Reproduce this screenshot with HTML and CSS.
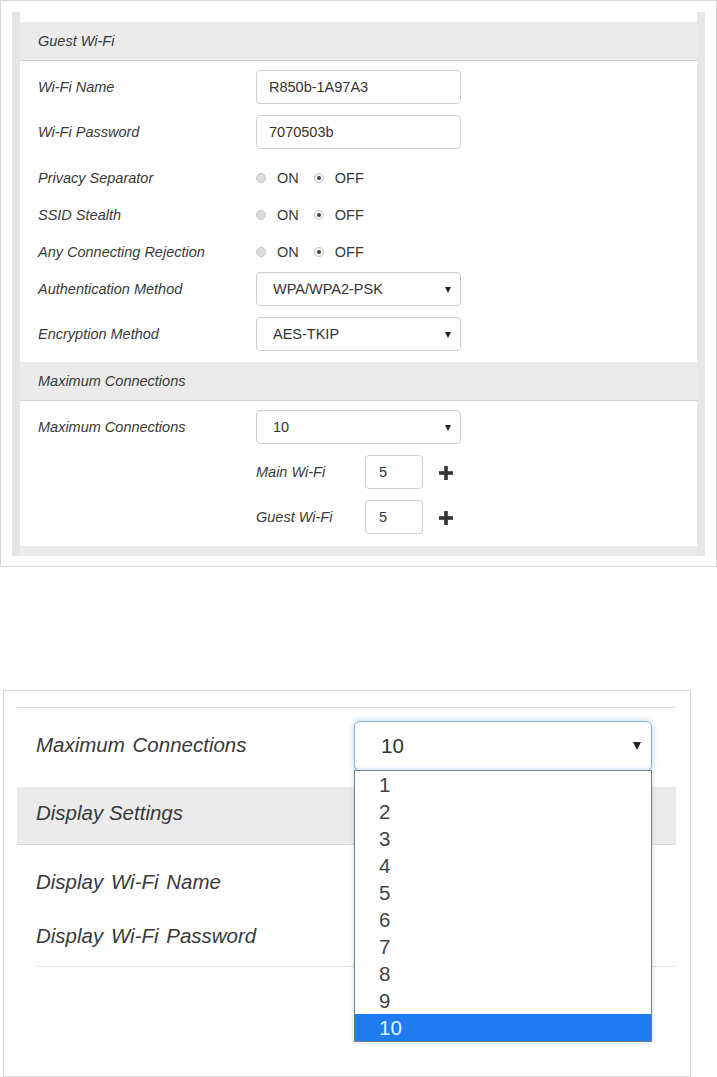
FILE: index.html
```html
<!DOCTYPE html>
<html lang="en">
<head>
  <meta charset="UTF-8" />
  <meta name="viewport" content="width=device-width, initial-scale=1.0"/>
  <title>Guest Wi-Fi Settings</title>
  <link rel="stylesheet" href="styles.css">
</head>
<body>
  <!-- first capture: guest wi-fi form -->
  <div class="shot top">
    <div class="frame">
      <div class="section-head">Guest Wi-Fi</div>
      <div class="fields">
        <div class="row">
          <div class="label">Wi-Fi Name</div>
          <input class="field" type="text" value="R850b-1A97A3">
        </div>
        <div class="row">
          <div class="label">Wi-Fi Password</div>
          <input class="field" type="text" value="7070503b">
        </div>
        <div class="row radio-row first">
          <div class="label">Privacy Separator</div>
          <span class="radio"></span><span class="opt">ON</span>
          <span class="radio checked"></span><span class="opt">OFF</span>
        </div>
        <div class="row radio-row">
          <div class="label">SSID Stealth</div>
          <span class="radio"></span><span class="opt">ON</span>
          <span class="radio checked"></span><span class="opt">OFF</span>
        </div>
        <div class="row radio-row">
          <div class="label">Any Connecting Rejection</div>
          <span class="radio"></span><span class="opt">ON</span>
          <span class="radio checked"></span><span class="opt">OFF</span>
        </div>
        <div class="row after-radio">
          <div class="label">Authentication Method</div>
          <div class="field select">WPA/WPA2-PSK<span class="arrow"></span></div>
        </div>
        <div class="row">
          <div class="label">Encryption Method</div>
          <div class="field select">AES-TKIP<span class="arrow"></span></div>
        </div>
      </div>

      <div class="section-head">Maximum Connections</div>
      <div class="fields second">
        <div class="row">
          <div class="label">Maximum Connections</div>
          <div class="field select">10<span class="arrow"></span></div>
        </div>
        <div class="row">
          <div class="label"></div>
          <div class="sub-label">Main Wi-Fi</div>
          <input class="small-field" type="text" value="5">
          <svg class="plus" width="14" height="14" viewBox="0 0 14 14"><rect x="5.2" y="0" width="3.6" height="14" fill="#333"/><rect x="0" y="5.2" width="14" height="3.6" fill="#333"/></svg>
        </div>
        <div class="row">
          <div class="label"></div>
          <div class="sub-label">Guest Wi-Fi</div>
          <input class="small-field" type="text" value="5">
          <svg class="plus" width="14" height="14" viewBox="0 0 14 14"><rect x="5.2" y="0" width="3.6" height="14" fill="#333"/><rect x="0" y="5.2" width="14" height="3.6" fill="#333"/></svg>
        </div>
      </div>
      <div class="foot-band"></div>
    </div>
  </div>

  <!-- second capture: open dropdown -->
  <div class="shot bottom">
    <div class="inner">
      <div class="big-row head-row">
        <div class="big-label">Maximum Connections</div>
        <div class="big-select">10<span class="big-arrow"></span></div>
        <div class="dropdown">
          <div class="item">1</div>
          <div class="item">2</div>
          <div class="item">3</div>
          <div class="item">4</div>
          <div class="item">5</div>
          <div class="item">6</div>
          <div class="item">7</div>
          <div class="item">8</div>
          <div class="item">9</div>
          <div class="item active">10</div>
        </div>
      </div>
      <div class="big-head">Display Settings</div>
      <div class="big-list">
        <div class="big-row"><div class="big-label">Display Wi-Fi Name</div></div>
        <div class="big-row"><div class="big-label">Display Wi-Fi Password</div></div>
      </div>
      <div class="end-line"></div>
    </div>
  </div>
</body>
</html>
```

FILE: styles.css
```css
body {
  margin: 0;
  font-family: "Liberation Sans", Arial, sans-serif;
  color: #333;
  background-color: white;
}

.shot {
  border: 1px solid #d6d6d6;
  background-color: white;
}

.top {
  width: 693px;
  padding: 11px 11px 10px 11px;
}

.frame {
  border-left: 8px solid #e6e6e6;
  border-right: 8px solid #e6e6e6;
  padding-top: 10px;
}

.section-head {
  background-color: #ebebeb;
  border-bottom: 1px solid #d3d3d3;
  height: 38px;
  line-height: 38px;
  padding-left: 18px;
  font-size: 14.5px;
  font-style: italic;
  color: #3a3a3a;
}

.fields {
  padding: 3px 0 6px 0;
}

.fields.second {
  padding: 3px 0 7px 0;
}

.row {
  display: flex;
  align-items: center;
  height: 45px;
}

.radio-row {
  height: 37px;
}

.radio-row.first {
  margin-top: 5px;
}

.row.after-radio {
  margin-top: -4px;
}

.label {
  width: 218px;
  padding-left: 18px;
  font-size: 14.5px;
  font-style: italic;
  color: #3a3a3a;
  flex-shrink: 0;
}

.field {
  box-sizing: border-box;
  width: 205px;
  height: 34px;
  border: 1px solid #cfcfcf;
  border-radius: 4px;
  padding: 0 0 0 12px;
  font-family: "Liberation Sans", Arial, sans-serif;
  font-size: 14.5px;
  color: #333;
  background-color: white;
  margin: 0;
  outline: none;
}

.select {
  position: relative;
  display: flex;
  align-items: center;
  padding-left: 16px;
  box-shadow: inset 0 1px 1px rgba(0, 0, 0, 0.04);
}

.arrow {
  position: absolute;
  right: 9px;
  top: 14px;
  width: 0;
  height: 0;
  border-left: 3px solid transparent;
  border-right: 3px solid transparent;
  border-top: 6px solid #222;
}

.radio {
  box-sizing: border-box;
  width: 10px;
  height: 10px;
  border-radius: 50%;
  border: 1px solid #c4c4c4;
  background-color: #dedede;
  margin-left: 0;
  position: relative;
}

.radio.checked {
  background-color: #f2f2f2;
  margin-left: 15px;
}

.radio.checked::after {
  content: "";
  position: absolute;
  left: 2px;
  top: 2px;
  width: 4px;
  height: 4px;
  border-radius: 50%;
  background-color: #444;
}

.opt {
  margin-left: 11px;
  font-size: 14.5px;
  color: #3a3a3a;
}

.sub-label {
  width: 109px;
  font-size: 14.5px;
  font-style: italic;
  color: #3a3a3a;
}

.small-field {
  box-sizing: border-box;
  width: 58px;
  height: 34px;
  border: 1px solid #cfcfcf;
  border-radius: 4px;
  padding: 0 0 0 13px;
  margin: 0;
  font-family: "Liberation Sans", Arial, sans-serif;
  font-size: 14.5px;
  color: #333;
  outline: none;
}

.plus {
  margin-left: 16px;
  margin-top: 2px;
}

.foot-band {
  height: 10px;
  background-color: #ebebeb;
}

/* second capture */

.bottom {
  width: 686px;
  height: 385px;
  margin: 123px 0 0 3px;
}

.inner {
  margin: 16px 14px 0 13px;
  border-top: 1px solid #dcdcdc;
}

.big-row {
  display: flex;
  align-items: center;
  height: 54px;
  position: relative;
}

.head-row {
  height: 79px;
  align-items: flex-start;
}

.big-label {
  width: 318px;
  padding-left: 19px;
  font-size: 20.5px;
  font-style: italic;
  color: #3a3a3a;
  word-spacing: 2px;
  flex-shrink: 0;
}

.head-row .big-label {
  margin-top: 25px;
}

.big-select {
  position: relative;
  box-sizing: border-box;
  width: 298px;
  height: 50px;
  margin-top: 13px;
  border: 1px solid #8fb4d0;
  border-radius: 6px;
  box-shadow: 0 0 6px rgba(102, 175, 233, 0.55);
  padding-left: 26px;
  font-size: 20.5px;
  line-height: 48px;
  color: #333;
  background-color: white;
}

.big-arrow {
  position: absolute;
  right: 10px;
  top: 20px;
  width: 0;
  height: 0;
  border-left: 4px solid transparent;
  border-right: 4px solid transparent;
  border-top: 8px solid #222;
}

.dropdown {
  position: absolute;
  left: 337px;
  top: 62px;
  box-sizing: border-box;
  width: 298px;
  border: 1px solid #7d7d7d;
  background-color: white;
  box-shadow: 0 0 5px rgba(102, 175, 233, 0.45);
  z-index: 2;
}

.item {
  height: 27px;
  line-height: 27px;
  padding-left: 24px;
  font-size: 20.5px;
  color: #444;
}

.item.active {
  background-color: #1e7cf0;
  color: #dff4ff;
}

.big-head {
  background-color: #ebebeb;
  border-bottom: 1px solid #d6d6d6;
  height: 51px;
  line-height: 51px;
  padding: 0 0 6px 19px;
  font-size: 20.5px;
  font-style: italic;
  color: #3a3a3a;
}

.big-list {
  padding-top: 10px;
}

.end-line {
  margin: 3px 0 0 19px;
  border-top: 1px solid #e2e2e2;
}
```
